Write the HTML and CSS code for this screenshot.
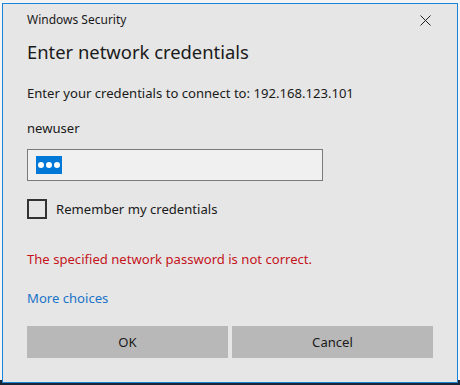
FILE: index.html
```html
<!DOCTYPE html>
<html lang="en">
<head>
    <meta charset="UTF-8">
    <title>Windows Security</title>
    <link rel="stylesheet" href="styles.css">
</head>
<body>

    <!-- Credentials dialog -->
    <div class="dialog">
        <div class="title-bar">
            <span class="caption">Windows Security</span>
            <button class="close-button" aria-label="Close">
                <svg width="11" height="11" viewBox="0 0 11 11">
                    <path d="M0.5 0.5 L10.5 10.5 M10.5 0.5 L0.5 10.5" stroke="#222" stroke-width="1" fill="none"/>
                </svg>
            </button>
        </div>

        <h1>Enter network credentials</h1>

        <p class="target">Enter your credentials to connect to: 192.168.123.101</p>
        <p class="username">newuser</p>

        <!-- Password field with the masked text selected -->
        <div class="password-box">
            <span class="selection">
                <span class="dot"></span>
                <span class="dot"></span>
                <span class="dot"></span>
            </span>
        </div>

        <label class="remember">
            <span class="check"></span>
            Remember my credentials
        </label>

        <p class="error">The specified network password is not correct.</p>
        <a href="#" class="more">More choices</a>

        <div class="buttons">
            <button class="btn">OK</button>
            <button class="btn">Cancel</button>
        </div>
    </div>

</body>
</html>
```

FILE: styles.css
```css
* {
    margin: 0;
    padding: 0;
    box-sizing: border-box;
}

body {
    width: 460px;
    height: 385px;
    overflow: hidden;
    font-family: "Segoe UI", "Noto Sans", sans-serif;
    color: #1a1a1a;
    background: linear-gradient(to bottom, #f4f4f4 0, #f4f4f4 380px, #1b2433 380px);
    padding: 3px 2px 2px 2px;
}

.dialog {
    width: 456px;
    height: 380px;
    background-color: #e6e6e6;
    border: 1px solid #1883d7;
    padding: 0 24px;
}

.title-bar {
    display: flex;
    justify-content: space-between;
    align-items: center;
    height: 20px;
    margin-top: 6px;
}

.caption {
    font-size: 12px;
    line-height: 20px;
}

.close-button {
    background: none;
    border: none;
    width: 11px;
    height: 11px;
    margin-right: 2px;
    display: flex;
}

h1 {
    font-weight: normal;
    font-size: 18.4px;
    line-height: 28px;
    margin-top: 8px;
}

.target,
.username {
    font-size: 13.1px;
    line-height: 20px;
}

.target {
    margin-top: 17px;
}

.username {
    margin-top: 15px;
}

.password-box {
    display: flex;
    align-items: center;
    width: 296px;
    height: 32px;
    margin-top: 11px;
    background-color: #f0f0f0;
    border: 1px solid #7a7a7a;
    padding: 0 8px;
}

.selection {
    display: flex;
    align-items: center;
    justify-content: center;
    gap: 2px;
    height: 18px;
    width: 26px;
    background-color: #0078d7;
}

.dot {
    width: 6px;
    height: 6px;
    border-radius: 50%;
    background-color: #fff;
}

.remember {
    display: flex;
    align-items: center;
    gap: 9px;
    margin-top: 18px;
    font-size: 13.1px;
    line-height: 20px;
}

.check {
    width: 20px;
    height: 20px;
    border: 2px solid #333;
}

.error {
    margin-top: 30px;
    font-size: 13.1px;
    line-height: 20px;
    color: #c4141c;
}

.more {
    display: block;
    margin-top: 19px;
    font-size: 13.1px;
    line-height: 20px;
    color: #1a73c8;
    text-decoration: none;
}

.buttons {
    display: flex;
    gap: 4px;
    margin-top: 18px;
}

.btn {
    flex: 1;
    height: 32px;
    background-color: #b8b8b8;
    border: none;
    font-family: inherit;
    font-size: 13.1px;
    color: #1a1a1a;
}
```
